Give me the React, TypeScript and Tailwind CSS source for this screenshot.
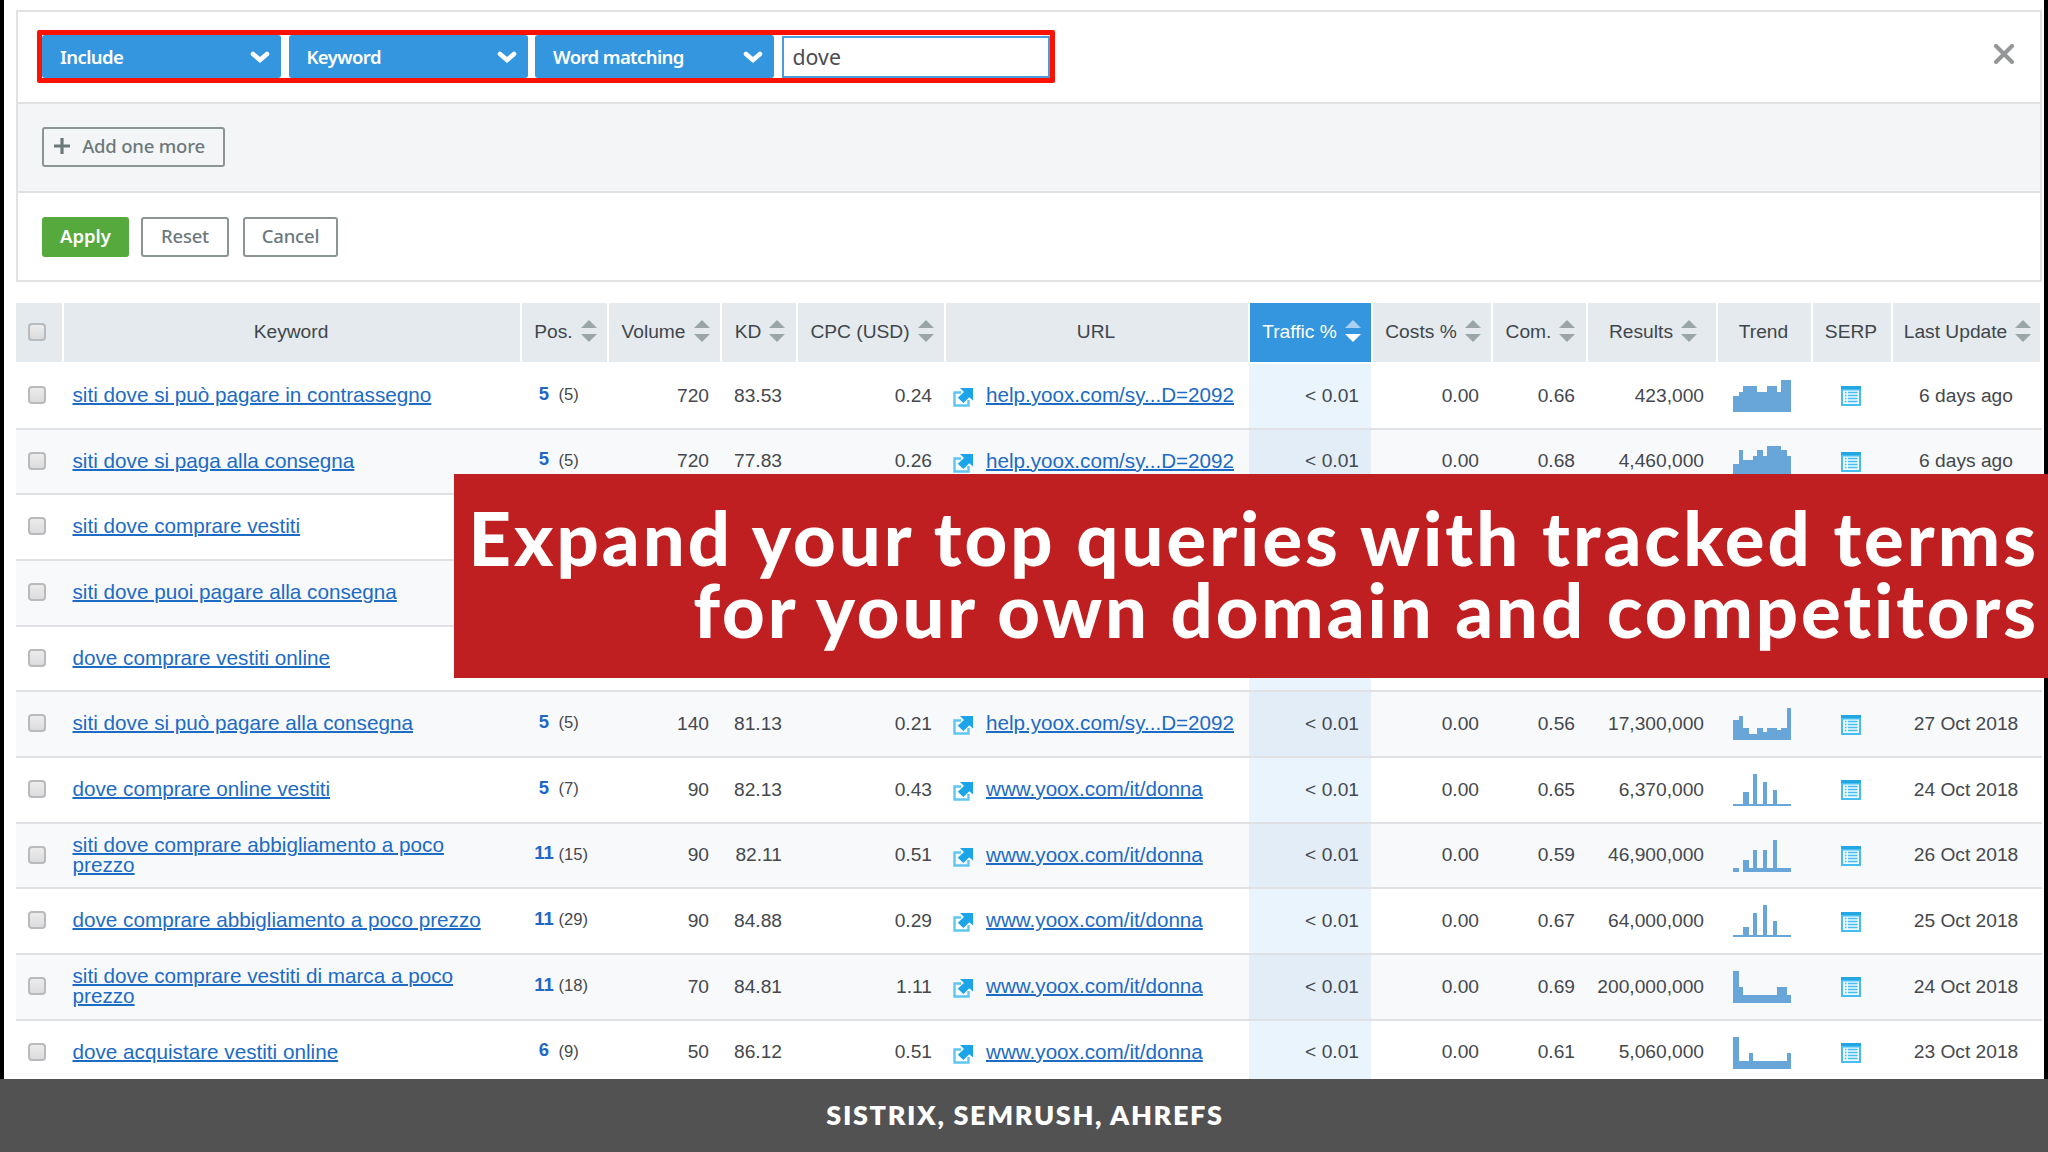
import { ReactNode } from 'react'

interface KeywordRow {
	keyword: string
	pos?: string
	prevPos?: string
	volume?: string
	kd?: string
	cpc?: string
	url?: string
	com?: string
	results?: string
	trend?: number[]
	updated?: string
}

const HELP_URL = 'help.yoox.com/sy...D=2092'
const DONNA_URL = 'www.yoox.com/it/donna'

const rows: KeywordRow[] = [
	{ keyword: 'siti dove si può pagare in contrassegno', pos: '5', prevPos: '(5)', volume: '720', kd: '83.53', cpc: '0.24', url: HELP_URL, com: '0.66', results: '423,000', trend: [16, 20, 26, 26, 26, 20, 20, 26, 26, 20, 32, 32], updated: '6 days ago' },
	{ keyword: 'siti dove si paga alla consegna', pos: '5', prevPos: '(5)', volume: '720', kd: '77.83', cpc: '0.26', url: HELP_URL, com: '0.68', results: '4,460,000', trend: [14, 28, 18, 18, 22, 28, 22, 32, 32, 32, 28, 22], updated: '6 days ago' },
	{ keyword: 'siti dove comprare vestiti' },
	{ keyword: 'siti dove puoi pagare alla consegna' },
	{ keyword: 'dove comprare vestiti online' },
	{ keyword: 'siti dove si può pagare alla consegna', pos: '5', prevPos: '(5)', volume: '140', kd: '81.13', cpc: '0.21', url: HELP_URL, com: '0.56', results: '17,300,000', trend: [20, 24, 12, 6, 6, 12, 8, 12, 12, 10, 12, 32], updated: '27 Oct 2018' },
	{ keyword: 'dove comprare online vestiti', pos: '5', prevPos: '(7)', volume: '90', kd: '82.13', cpc: '0.43', url: DONNA_URL, com: '0.65', results: '6,370,000', trend: [2, 2, 14, 2, 32, 2, 24, 2, 16, 2, 2, 2], updated: '24 Oct 2018' },
	{ keyword: 'siti dove comprare abbigliamento a poco prezzo', pos: '11', prevPos: '(15)', volume: '90', kd: '82.11', cpc: '0.51', url: DONNA_URL, com: '0.59', results: '46,900,000', trend: [4, 0, 12, 4, 22, 4, 22, 4, 32, 4, 4, 4], updated: '26 Oct 2018' },
	{ keyword: 'dove comprare abbigliamento a poco prezzo', pos: '11', prevPos: '(29)', volume: '90', kd: '84.88', cpc: '0.29', url: DONNA_URL, com: '0.67', results: '64,000,000', trend: [2, 2, 10, 2, 24, 2, 32, 2, 16, 2, 2, 2], updated: '25 Oct 2018' },
	{ keyword: 'siti dove comprare vestiti di marca a poco prezzo', pos: '11', prevPos: '(18)', volume: '70', kd: '84.81', cpc: '1.11', url: DONNA_URL, com: '0.69', results: '200,000,000', trend: [32, 16, 8, 8, 8, 8, 8, 8, 8, 16, 16, 8], updated: '24 Oct 2018' },
	{ keyword: 'dove acquistare vestiti online', pos: '6', prevPos: '(9)', volume: '50', kd: '86.12', cpc: '0.51', url: DONNA_URL, com: '0.61', results: '5,060,000', trend: [32, 8, 8, 16, 8, 8, 8, 8, 8, 8, 8, 16], updated: '23 Oct 2018' },
]

const columns = [
	{ label: 'Keyword', sortable: false },
	{ label: 'Pos.', sortable: true },
	{ label: 'Volume', sortable: true },
	{ label: 'KD', sortable: true },
	{ label: 'CPC (USD)', sortable: true },
	{ label: 'URL', sortable: false },
	{ label: 'Traffic %', sortable: true, active: true },
	{ label: 'Costs %', sortable: true },
	{ label: 'Com.', sortable: true },
	{ label: 'Results', sortable: true },
	{ label: 'Trend', sortable: false },
	{ label: 'SERP', sortable: false },
	{ label: 'Last Update', sortable: true },
]

const GRID = 'grid grid-cols-[48px_458px_87px_113px_76px_148px_304px_123px_120px_95px_130px_95px_80px_149px]'

// left edges of the twelve monthly bars, snapped to a 2px grid
const BAR_EDGES = [0, 6, 10, 16, 20, 24, 30, 34, 40, 44, 48, 54, 58]

const Checkbox = () => (
	<div className="mb-[2px] h-[18px] w-[18px] rounded-[4px] border-2 border-[#b9babb] bg-gradient-to-b from-[#ececec] to-[#dcdcde]" />
)

const SortArrows = ({ active }: { active?: boolean }) => (
	<svg width="16" height="22" viewBox="0 0 16 22" className="mb-[3px] shrink-0">
		<path d="M8 0L16 8H0Z" fill={active ? '#a9d0ef' : '#9aa5a8'} />
		<path d="M0 14H16L8 22Z" fill={active ? '#ffffff' : '#9aa5a8'} />
	</svg>
)

const Trend = ({ values }: { values: number[] }) => (
	<svg width="58" height="32" viewBox="0 0 58 32" fill="#68a5d8" shapeRendering="crispEdges">
		{values.map((v, i) => (
			<rect key={i} x={BAR_EDGES[i]} y={32 - v} width={BAR_EDGES[i + 1] - BAR_EDGES[i]} height={v} />
		))}
	</svg>
)

const ExternalIcon = () => (
	<svg width="20" height="19" viewBox="0 0 20 19" className="shrink-0">
		<path d="M8 4.5H1.5V17.5H15.5V12" fill="none" stroke="#5fc6f2" strokeWidth="2.4" />
		<path d="M7 0H20V12.5L16.3 9.2L10.4 15L4.8 9.8L11 4Z" fill="#1ba5e8" />
	</svg>
)

const SerpIcon = () => (
	<svg width="20" height="20" viewBox="0 0 20 20">
		<rect width="20" height="20" fill="#45bdf0" />
		<rect width="20" height="3" fill="#22a7e2" />
		<rect x="2" y="4.5" width="16" height="13.5" fill="#eefaff" />
		<path d="M4 6.5H5.5M4 9.5H5.5M4 12.5H5.5M4 15.5H5.5M7 6.5H16.5M7 9.5H16.5M7 12.5H16.5M7 15.5H16.5" stroke="#45bdf0" strokeWidth="1.5" />
	</svg>
)

const Select = ({ label }: { label: string }) => (
	<div className="flex h-[43px] w-[239px] items-center justify-between rounded-[3px] bg-[#3496de] pr-[11px] pl-[18px] text-[18.5px] font-semibold text-white">
		<span className="tracking-[-0.6px]">{label}</span>
		<svg width="20" height="14" viewBox="0 0 20 14">
			<path d="M3 4L10 10L17 4" fill="none" stroke="white" strokeWidth="4.6" strokeLinecap="round" />
		</svg>
	</div>
)

const OutlineButton = ({ className, children }: { className: string; children: ReactNode }) => (
	<button className={`flex h-10 items-center justify-center rounded-[3px] border-2 border-[#8d9496] pb-[2px] text-[18.5px] font-medium tracking-[-0.2px] text-[#6c797c] ${className}`}>
		{children}
	</button>
)

const Num = ({ className, children }: { className?: string; children?: ReactNode }) => (
	<div className={`flex h-full items-center justify-end pb-px ${className ?? ''}`}>{children}</div>
)

const Row = ({ row, odd }: { row: KeywordRow; odd: boolean }) => (
	<div className={`${GRID} h-[65.68px] items-center border-b-2 border-[#dfe1e4] text-[19.2px] leading-none text-[#45484c] ${odd ? 'bg-[#f8f9fb]' : 'bg-white'}`}>
		<div className="pl-[12px]">
			<Checkbox />
		</div>
		<div className="pr-10 pb-[2px] pl-[8.5px] text-[20.7px] leading-[20px] text-[#1c6bc4] underline decoration-2">{row.keyword}</div>
		<div className="flex items-center pb-px">
			<span className="ml-[12px] w-[20px] pb-[3px] text-center text-[18.5px] font-bold text-[#1f68c8]">{row.pos}</span>
			<span className="ml-[4.5px] text-[16.6px]">{row.prevPos}</span>
		</div>
		<Num className="pr-[13px]">{row.volume}</Num>
		<Num className="pr-[16px]">{row.kd}</Num>
		<Num className="pr-[14px]">{row.cpc}</Num>
		<div className="flex items-center gap-[13px] pb-px pl-[7px]">
			{row.url && (
				<>
					<span className="pt-[4px]">
						<ExternalIcon />
					</span>
					<span className="text-[20.65px] text-[#1c6bc4] underline decoration-2">{row.url}</span>
				</>
			)}
		</div>
		<Num className={`mr-[2px] ml-[-1px] pr-[12px] ${odd ? 'bg-[#e2edf7]' : 'bg-[#e9f4fd]'}`}>{row.url && '< 0.01'}</Num>
		<Num className="pr-[14px]">{row.url && '0.00'}</Num>
		<Num className="pr-[13px]">{row.com}</Num>
		<Num className="pr-[14px]">{row.results}</Num>
		<div className="pl-[15px]">{row.trend && <Trend values={row.trend} />}</div>
		<div className="flex justify-center pt-px pr-[4px]">{row.url && <SerpIcon />}</div>
		<div className="pr-[3px] pb-px text-center">{row.updated}</div>
	</div>
)

export default function App() {
	return (
		<div className="relative flex h-[1152px] w-[2048px] flex-col overflow-hidden bg-black font-['Liberation_Sans',Arial,sans-serif]">
			<div className="mx-1 h-[1079px] shrink-0 overflow-hidden bg-white pt-[10px] pl-3">
				{/* Filter panel */}
				<div className="w-[2026px] border-2 border-[#e2e2e3] font-['Noto_Sans',sans-serif]">
					<div className="flex h-[90px] items-start justify-between">
						<div className="mt-[18px] ml-[19px] flex h-[53px] w-[1018px] items-center gap-[7.5px] rounded-[2px] border-[5px] border-[#fd1100]">
							<Select label="Include" />
							<Select label="Keyword" />
							<Select label="Word matching" />
							<div className="flex h-[42px] flex-1 items-center border-2 border-[#4a9cdc] pt-px pl-[9px] text-[21.3px] text-[#4b4d50]">dove</div>
						</div>
						<svg width="20" height="20" viewBox="0 0 20 20" className="mt-8 mr-[26px]">
							<path d="M2 2L18 18M18 2L2 18" stroke="#949697" strokeWidth="4" strokeLinecap="round" />
						</svg>
					</div>
					<div className="flex h-[91px] items-center border-y-2 border-[#e0e1e2] bg-[#f4f5f6] pb-[2px] pl-6">
						<OutlineButton className="w-[183px] gap-[11px] pr-[9px]">
							<svg width="18" height="18" viewBox="0 0 18 18">
								<path d="M9 1V17M1 9H17" stroke="#6c797c" strokeWidth="3.2" />
							</svg>
							Add one more
						</OutlineButton>
					</div>
					<div className="flex h-[87px] items-center pl-6">
						<button className="h-10 w-[87px] rounded-[3px] bg-[#56a93c] pb-px text-[18.5px] font-semibold text-white">Apply</button>
						<OutlineButton className="ml-3 w-[88px]">Reset</OutlineButton>
						<OutlineButton className="ml-[14px] w-[95px]">Cancel</OutlineButton>
					</div>
				</div>

				{/* Keyword table */}
				<div className="mt-[21px] w-[2026px]">
					<div className={`${GRID} mb-[2px] h-[59px] text-[19.2px] text-[#3f464b]`}>
						<div className="mr-[2px] flex items-center bg-[#e4eaee] pl-[12px]">
							<Checkbox />
						</div>
						{columns.map((col) => (
							<div
								key={col.label}
								className={`mr-[2px] flex items-center justify-center gap-[8px] ${col.sortable ? 'pl-[2px]' : 'pr-[2px]'} ${col.active ? 'bg-[#3496de] text-white' : 'bg-[#e4eaee]'}`}
							>
								<span className="whitespace-nowrap">{col.label}</span>
								{col.sortable && <SortArrows active={col.active} />}
							</div>
						))}
					</div>
					{rows.map((row, i) => (
						<Row key={row.keyword} row={row} odd={i % 2 === 1} />
					))}
				</div>
			</div>

			<div className="flex flex-1 items-center justify-center bg-[#525253] pb-px pl-[2px] font-['Lato',sans-serif] text-[27px] font-extrabold tracking-[1.65px] text-white">
				SISTRIX, SEMRUSH, AHREFS
			</div>

			{/* Title banner over the table */}
			<div className="absolute top-[474px] right-0 flex h-[204px] w-[1594px] flex-col items-end bg-[#c01f21] pt-[28px] pr-[9px] font-['Lato',sans-serif] text-[74px] leading-[71.7px] font-black whitespace-nowrap text-white">
				<div className="tracking-[3.05px]">Expand your top queries with tracked terms</div>
				<div className="tracking-[2.95px]">for your own domain and competitors</div>
			</div>
		</div>
	)
}
